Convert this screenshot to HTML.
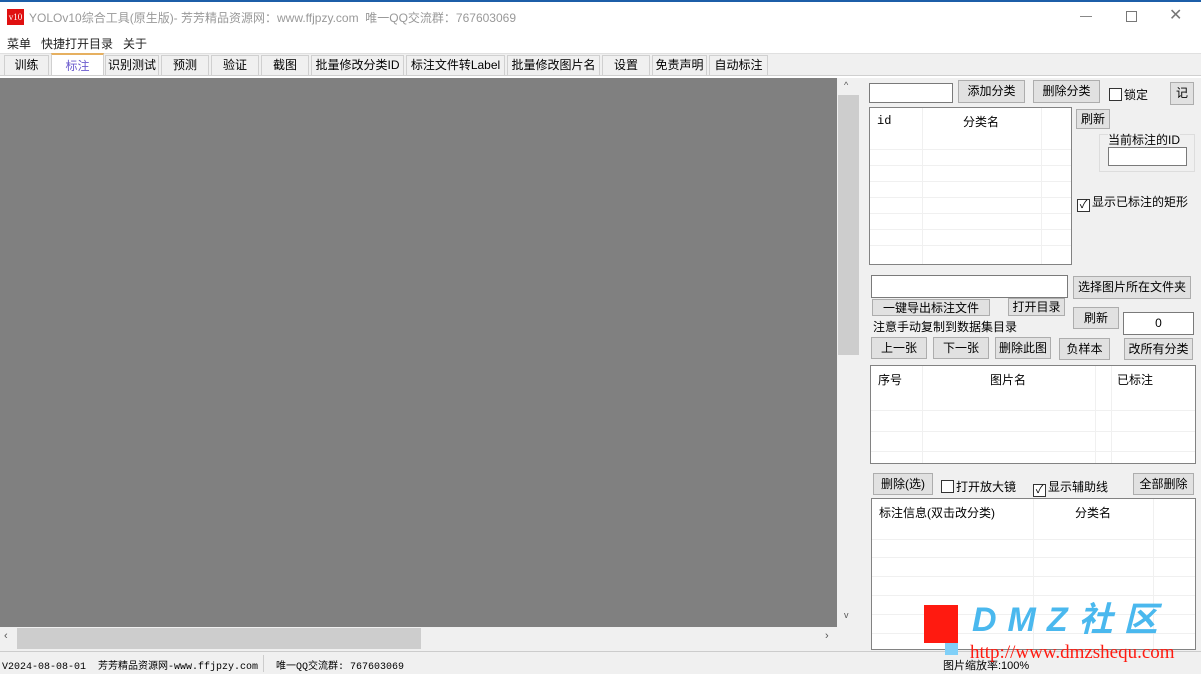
<!DOCTYPE html><html><head><meta charset="utf-8"><style>
*{box-sizing:border-box;margin:0;padding:0}
body{width:1201px;height:674px;position:relative;overflow:hidden;background:#f0f0f0;font-family:"Liberation Sans","Noto Sans CJK SC",sans-serif;font-size:12px;color:#000}
.a{position:absolute}
.btn{position:absolute;background:#e1e1e1;border:1px solid #adadad;text-align:center;font-size:12px;line-height:20px}
.inp{position:absolute;background:#fff;border:1px solid #7a7a7a}
.tab{position:absolute;top:55px;height:20px;border:1px solid #d0d0d0;border-bottom:none;background:#f0f0f0;text-align:center;line-height:19px;font-size:12px}
.list{position:absolute;background:#fff;border:1px solid #828282}
.cb{display:inline-block;width:13px;height:13px;border:1px solid #333;background:#fff;vertical-align:-2px;margin-right:2px;font-size:11px;line-height:11px;text-align:center}
.hl{position:absolute;left:0;right:0;height:1px;background:#f0f0f0}
.vl{position:absolute;top:0;bottom:0;width:1px;background:#f0f0f0}
</style></head><body>
<div class="a" style="left:0;top:0;width:1201px;height:2px;background:#1c5ea8"></div>
<div class="a" style="left:0;top:2px;width:1201px;height:31px;background:#fff"></div>
<div class="a" style="left:7px;top:9px;width:17px;height:16px;background:#e01010;color:#fff;font-size:9px;line-height:16px;text-align:center;font-family:'Liberation Serif',serif">v10</div>
<div class="a" style="left:29px;top:9px;color:#999;font-size:12px">YOLOv10综合工具(原生版)- 芳芳精品资源网：www.ffjpzy.com &nbsp;唯一QQ交流群：767603069</div>
<div class="a" style="left:1080px;top:16px;width:12px;height:1px;background:#888"></div>
<div class="a" style="left:1126px;top:11px;width:11px;height:11px;border:1px solid #777"></div>
<div class="a" style="left:1169px;top:5px;color:#777;font-size:16px">✕</div>
<div class="a" style="left:0;top:33px;width:1201px;height:20px;background:#fff"></div>
<div class="a" style="left:7px;top:35px;color:#222">菜单 &nbsp; 快捷打开目录 &nbsp; 关于</div>
<div class="a" style="left:0;top:53px;width:1201px;height:1px;background:#e0e0e0"></div>
<div class="tab" style="left:4px;width:45px">训练</div>
<div class="tab" style="left:51px;width:53px;top:53px;height:24px;background:#fff;color:#6a5acd;border-top:2px solid #e6b060;line-height:22px">标注</div>
<div class="tab" style="left:105px;width:54px">识别测试</div>
<div class="tab" style="left:161px;width:48px">预测</div>
<div class="tab" style="left:211px;width:48px">验证</div>
<div class="tab" style="left:261px;width:48px">截图</div>
<div class="tab" style="left:311px;width:93px">批量修改分类ID</div>
<div class="tab" style="left:406px;width:99px">标注文件转Label</div>
<div class="tab" style="left:507px;width:93px">批量修改图片名</div>
<div class="tab" style="left:602px;width:48px">设置</div>
<div class="tab" style="left:652px;width:55px">免责声明</div>
<div class="tab" style="left:709px;width:59px">自动标注</div>
<div class="a" style="left:0;top:75px;width:1201px;height:3px;background:#fff;border-top:1px solid #d0d0d0"></div>
<div class="a" style="left:0;top:78px;width:837px;height:549px;background:#808080"></div>
<div class="a" style="left:837px;top:78px;width:23px;height:549px;background:#f0f0f0"></div>
<div class="a" style="left:838px;top:95px;width:21px;height:260px;background:#cdcdcd"></div>
<div class="a" style="left:844px;top:80px;color:#555;font-size:9px">^</div>
<div class="a" style="left:844px;top:610px;color:#555;font-size:9px">v</div>
<div class="a" style="left:0;top:627px;width:837px;height:23px;background:#f0f0f0"></div>
<div class="a" style="left:17px;top:628px;width:404px;height:21px;background:#cdcdcd"></div>
<div class="a" style="left:4px;top:630px;color:#555;font-size:11px">‹</div>
<div class="a" style="left:825px;top:630px;color:#555;font-size:11px">›</div>
<div class="a" style="left:0;top:651px;width:1201px;height:1px;background:#ccc"></div>
<div class="a" style="left:2px;top:657px;font-size:10px;font-family:'Liberation Mono','Noto Sans CJK SC',monospace">V2024-08-08-01 &nbsp;芳芳精品资源网-www.ffjpzy.com &nbsp; 唯一QQ交流群: 767603069</div>
<div class="a" style="left:263px;top:655px;width:1px;height:17px;background:#ccc"></div>
<div class="a" style="left:943px;top:657px;font-size:11px">图片缩放率:100%</div>

<div class="inp" style="left:869px;top:83px;width:84px;height:20px"></div>
<div class="btn" style="left:958px;top:80px;width:67px;height:23px">添加分类</div>
<div class="btn" style="left:1033px;top:80px;width:67px;height:23px">删除分类</div>
<div class="a" style="left:1109px;top:86px"><span class="cb"></span>锁定</div>
<div class="btn" style="left:1170px;top:82px;width:24px;height:23px">记</div>
<div class="list" style="left:869px;top:107px;width:203px;height:158px">
<div class="vl" style="left:52px"></div><div class="vl" style="left:171px"></div>
<div class="hl" style="top:41px"></div><div class="hl" style="top:57px"></div><div class="hl" style="top:73px"></div><div class="hl" style="top:89px"></div><div class="hl" style="top:105px"></div><div class="hl" style="top:121px"></div><div class="hl" style="top:137px"></div>
<div class="a" style="left:7px;top:6px;font-family:'Liberation Mono',monospace">id</div><div class="a" style="left:93px;top:5px">分类名</div></div>
<div class="btn" style="left:1076px;top:109px;width:34px;height:20px;line-height:18px">刷新</div>
<div class="a" style="left:1099px;top:134px;width:96px;height:38px;border:1px solid #ddd"></div>
<div class="a" style="left:1108px;top:131px;background:#f0f0f0">当前标注的ID</div>
<div class="inp" style="left:1108px;top:147px;width:79px;height:19px"></div>
<div class="a" style="left:1077px;top:193px"><span class="cb">✓</span>显示已标注的矩形</div>
<div class="inp" style="left:871px;top:275px;width:197px;height:23px"></div>
<div class="btn" style="left:1073px;top:276px;width:118px;height:23px">选择图片所在文件夹</div>
<div class="btn" style="left:872px;top:299px;width:118px;height:17px;line-height:16px">一键导出标注文件</div>
<div class="btn" style="left:1008px;top:298px;width:57px;height:18px;line-height:17px">打开目录</div>
<div class="a" style="left:873px;top:318px">注意手动复制到数据集目录</div>
<div class="btn" style="left:1073px;top:307px;width:46px;height:22px">刷新</div>
<div class="inp" style="left:1123px;top:312px;width:71px;height:23px;text-align:center;line-height:21px">0</div>
<div class="btn" style="left:871px;top:337px;width:56px;height:22px">上一张</div>
<div class="btn" style="left:933px;top:337px;width:56px;height:22px">下一张</div>
<div class="btn" style="left:995px;top:337px;width:56px;height:22px">删除此图</div>
<div class="btn" style="left:1059px;top:338px;width:51px;height:22px">负样本</div>
<div class="btn" style="left:1124px;top:338px;width:69px;height:22px">改所有分类</div>
<div class="list" style="left:870px;top:365px;width:326px;height:99px">
<div class="vl" style="left:51px"></div><div class="vl" style="left:224px"></div><div class="vl" style="left:240px"></div>
<div class="hl" style="top:44px"></div><div class="hl" style="top:65px"></div><div class="hl" style="top:85px"></div>
<div class="a" style="left:7px;top:5px">序号</div><div class="a" style="left:119px;top:5px">图片名</div><div class="a" style="left:246px;top:5px">已标注</div></div>
<div class="btn" style="left:873px;top:473px;width:60px;height:22px">删除(选)</div>
<div class="a" style="left:941px;top:478px"><span class="cb"></span>打开放大镜</div>
<div class="a" style="left:1033px;top:478px"><span class="cb">✓</span>显示辅助线</div>
<div class="btn" style="left:1133px;top:473px;width:61px;height:22px">全部删除</div>
<div class="list" style="left:871px;top:498px;width:325px;height:152px">
<div class="vl" style="left:161px"></div><div class="vl" style="left:281px"></div>
<div class="hl" style="top:40px"></div><div class="hl" style="top:58px"></div><div class="hl" style="top:77px"></div><div class="hl" style="top:96px"></div><div class="hl" style="top:115px"></div><div class="hl" style="top:134px"></div>
<div class="a" style="left:7px;top:5px">标注信息(双击改分类)</div><div class="a" style="left:203px;top:5px">分类名</div></div>
<div class="a" style="left:924px;top:605px;width:34px;height:38px;background:#ff1a10"></div>
<div class="a" style="left:945px;top:643px;width:13px;height:12px;background:#80d0f8"></div>
<div class="a" style="left:972px;top:600px;color:#4ab8ee;font-size:34px;font-weight:bold;font-style:italic;letter-spacing:11px;line-height:40px">DMZ社区</div>
<div class="a" style="left:970px;top:642px;color:#ff1a10;font-size:19px;font-family:'Liberation Serif',serif">http://www.dmzshequ.com</div>
</body></html>
